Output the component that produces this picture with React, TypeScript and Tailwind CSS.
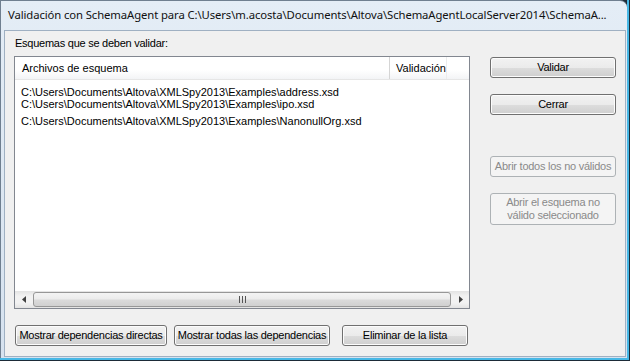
import React from 'react';

const sans = { fontFamily: '"Liberation Sans", Arial, sans-serif' };

const WinButton: React.FC<{ label: React.ReactNode; className?: string; disabled?: boolean }> = ({ label, className = '', disabled }) => (
    <div
        className={`flex items-center justify-center text-center whitespace-nowrap rounded-[3px] border text-[11px] leading-[13px] tracking-[-0.25px] ${
            disabled
                ? 'border-[#adb2b5] bg-[#f4f4f4] text-[#8a8a8a]'
                : 'border-[#707070] bg-[linear-gradient(to_bottom,#f2f2f2_0%,#ebebeb_50%,#dddddd_51%,#cfcfcf_100%)] text-black shadow-[inset_0_0_0_1px_#fcfcfc]'
        } ${className}`}
        style={sans}
    >
        {label}
    </div>
);

const rows = [
    { path: 'C:\\Users\\Documents\\Altova\\XMLSpy2013\\Examples\\address.xsd', mt: 'mt-[6px]' },
    { path: 'C:\\Users\\Documents\\Altova\\XMLSpy2013\\Examples\\ipo.xsd', mt: 'mt-[-1px]' },
    { path: 'C:\\Users\\Documents\\Altova\\XMLSpy2013\\Examples\\NanonullOrg.xsd', mt: 'mt-[4px]' },
];

const App: React.FC = () => {
    return (
        <div className="w-[630px] h-[361px] overflow-hidden bg-[#1d2b38]">
            <div className="w-[629px] h-[360px] border-r-2 border-b-2 border-[#47b8e6] flex flex-col">
                <div className="flex-1 flex flex-col border-l border-t border-[#6f7f90] rounded-tr-[7px] bg-[linear-gradient(to_bottom,#e4edf6,#d6e2ef)] overflow-hidden">
                    {/* title bar */}
                    <div
                        className="h-[29px] pl-[7px] flex items-center text-[11.3px] text-[#111] whitespace-nowrap overflow-hidden"
                        style={{ fontFamily: '"Noto Sans", "Open Sans", sans-serif', letterSpacing: '-0.1px' }}
                    >
                        Validación con SchemaAgent para C:\Users\m.acosta\Documents\Altova\SchemaAgentLocalServer2014\SchemaA...
                    </div>

                    {/* client area */}
                    <div className="flex-1 ml-[3px] mr-[1px] mb-[1px] border border-[#9fb0c2] bg-[#f0f0f0] flex items-start">
                        <div className="ml-[9px] mt-[3px] w-[456px] flex flex-col">
                            <div className="h-[18px] pl-[1px] flex items-center text-[11px] tracking-[-0.25px] text-black" style={sans}>
                                Esquemas que se deben validar:
                            </div>

                            {/* list view */}
                            <div className="mt-[4px] h-[253px] border border-[#828790] bg-white flex flex-col" style={sans}>
                                <div className="h-[23px] flex text-[11px] text-black bg-[linear-gradient(to_bottom,#ffffff_0%,#ffffff_60%,#f3f4f6_100%)] border-b border-[#e6e6e6]">
                                    <div className="w-[375px] pl-[7px] flex items-center border-r border-[#d5d5d5]">Archivos de esquema</div>
                                    <div className="w-[57px] pl-[6px] flex items-center border-r border-[#ececec]">Validación</div>
                                </div>
                                <div className="flex-1 flex flex-col text-[11px] text-black">
                                    {rows.map((r) => (
                                        <div key={r.path} className={`h-[13px] pl-[6px] leading-[13px] whitespace-nowrap ${r.mt}`}>
                                            {r.path}
                                        </div>
                                    ))}
                                </div>
                                {/* horizontal scrollbar */}
                                <div className="h-[17px] flex bg-[linear-gradient(to_bottom,#e3e3e3,#f2f2f2_30%,#f2f2f2_70%,#e3e3e3)]">
                                    <div className="w-[17px] flex items-center justify-center">
                                        <svg width="4" height="7" viewBox="0 0 4 7"><path d="M4 0 L0 3.5 L4 7 Z" fill="#404040" /></svg>
                                    </div>
                                    <div className="flex-1 my-[1px] mx-[1px] rounded-[3px] border border-[#979797] bg-[linear-gradient(to_bottom,#f4f4f4_0%,#ececec_45%,#dadada_55%,#d0d0d0_100%)] flex items-center justify-center">
                                        <div className="flex gap-[2px]">
                                            <div className="w-[1px] h-[7px] bg-[#555]" />
                                            <div className="w-[1px] h-[7px] bg-[#555]" />
                                            <div className="w-[1px] h-[7px] bg-[#555]" />
                                        </div>
                                    </div>
                                    <div className="w-[17px] flex items-center justify-center">
                                        <svg width="4" height="7" viewBox="0 0 4 7"><path d="M0 0 L4 3.5 L0 7 Z" fill="#404040" /></svg>
                                    </div>
                                </div>
                            </div>

                            {/* bottom buttons */}
                            <div className="mt-[16px] flex">
                                <WinButton label="Mostrar dependencias directas" className="ml-[1px] w-[152px] h-[21px]" />
                                <WinButton label="Mostrar todas las dependencias" className="ml-[7px] w-[156px] h-[21px]" />
                                <WinButton label="Eliminar de la lista" className="ml-[12px] w-[126px] h-[21px]" />
                            </div>
                        </div>

                        {/* right buttons */}
                        <div className="ml-[20px] mt-[26px] w-[126px] flex flex-col">
                            <WinButton label="Validar" className="h-[21px]" />
                            <WinButton label="Cerrar" className="mt-[16px] h-[21px]" />
                            <WinButton label="Abrir todos los no válidos" className="mt-[41px] h-[21px]" disabled />
                            <WinButton
                                label={<span>Abrir el esquema no<br />válido seleccionado</span>}
                                className="mt-[16px] h-[32px]"
                                disabled
                            />
                        </div>
                    </div>
                </div>
            </div>
        </div>
    );
};

export default App;
